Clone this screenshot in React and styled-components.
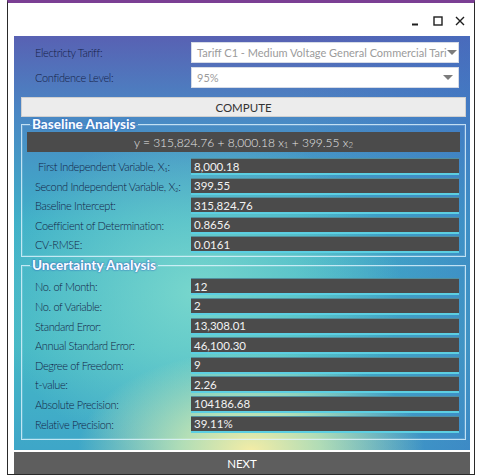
import React from "react";
import styled, { createGlobalStyle } from "styled-components";

const GlobalStyle = createGlobalStyle`
  body {
    margin: 0;
    background: #ffffff;
    font-family: Lato, "Open Sans", sans-serif;
  }
`;

const Window = styled.div`
  box-sizing: border-box;
  width: 468px;
  height: 475px;
  margin-left: 7px;
  border: 1px solid #2a2a2a;
  border-top: 3px solid #7b3f94;
  background: #ffffff;
  display: flex;
  flex-direction: column;
`;

const TitleBar = styled.div`
  height: 33px;
  flex: none;
  display: flex;
  justify-content: flex-end;
  align-items: center;
  gap: 12px;
  padding: 2px 9px 0 0;
  box-sizing: border-box;
`;

const WinButton = styled.svg`
  width: 10px;
  height: 10px;
  stroke: #1e1e1e;
  fill: none;
`;

const Body = styled.div`
  flex: 1;
  margin: 0 4px 0 6px;
  padding: 6px 4px 0 7px;
  background:
    radial-gradient(ellipse 38% 24% at 52% 100%, #f3eca6 0%, rgba(205, 234, 178, 0.8) 40%, rgba(120, 210, 200, 0) 100%),
    radial-gradient(ellipse 45% 40% at 40% 62%, rgba(125, 218, 205, 0.9) 0%, rgba(90, 200, 205, 0) 100%),
    linear-gradient(90deg, rgba(60, 130, 200, 0) 62%, rgba(60, 115, 195, 0.55) 100%),
    linear-gradient(180deg, #5861b3 0%, #4a86c4 18%, #3fb0c8 45%, #45b8c6 75%, #3ea6c8 100%);
`;

const SettingRow = styled.div`
  display: grid;
  grid-template-columns: 1fr 268px;
  align-items: center;
  padding: 0 7px 0 14px;
  & + & {
    margin-top: 4px;
  }
`;

const Label = styled.span`
  font-size: 11px;
  font-weight: 300;
  letter-spacing: -0.35px;
  color: #141d45;
  white-space: nowrap;
  padding-left: ${(p) => (p.$indent ? "3px" : "0")};
`;

const Select = styled.div`
  height: 21px;
  display: flex;
  align-items: center;
  background: #ffffff;
  border: 1px solid #d6dbe6;
  box-sizing: border-box;
  padding: 0 5px;
  font-size: 11px;
  color: #9b9b9b;
`;

const SelectText = styled.span`
  flex: 1;
  white-space: nowrap;
`;

const Arrow = styled.span`
  width: 0;
  height: 0;
  border-left: 5px solid transparent;
  border-right: 5px solid transparent;
  border-top: 5px solid #7c7c7c;
`;

const Compute = styled.div`
  margin-top: 9px;
  height: 20px;
  display: flex;
  align-items: center;
  justify-content: center;
  background: #ececec;
  border: 1px solid #d0d0d0;
  box-sizing: border-box;
  font-size: 11.5px;
  color: #333333;
`;

const Group = styled.fieldset`
  margin: ${(p) => p.$top}px 0 0 0;
  padding: 0 5px ${(p) => p.$bottom}px 5px;
  min-width: 0;
  border: 1px solid rgba(225, 245, 255, 0.8);
  box-shadow: inset 0 0 0 1px rgba(255, 255, 255, 0.15);
`;

const Legend = styled.legend`
  margin-left: 3px;
  padding: 0 2px;
  font-size: 13.5px;
  line-height: 12px;
  font-weight: 900;
  color: #f6fbff;
  text-shadow: 0 0 2px #2f64b8, 0 0 1px #2f64b8;
`;

const Formula = styled.div`
  margin-top: 2px;
  height: 20px;
  display: flex;
  align-items: center;
  justify-content: center;
  background: #4b4b4b;
  font-size: 12px;
  font-weight: 300;
  color: #e6e6e6;
  white-space: pre;
`;

const Sub = styled.span`
  font-size: 8px;
  display: inline-block;
  transform: translateY(3px);
`;

const Fields = styled.div`
  display: grid;
  grid-template-columns: 1fr 268px;
  row-gap: 2.6px;
  align-items: center;
  padding: 0 1px 0 8px;
  margin-top: ${(p) => p.$top}px;
`;

const Value = styled.div`
  height: 17px;
  box-sizing: border-box;
  background: #4b4b4b;
  border-top: 1px solid rgba(90, 200, 225, 0.55);
  border-bottom: 2px solid #5ccfe2;
  padding: 0 3px;
  display: flex;
  align-items: center;
  font-size: 11.5px;
  color: #f2f2f2;
`;

const Next = styled.div`
  flex: none;
  margin: 2px 4px 0 6px;
  height: 22px;
  display: flex;
  align-items: center;
  justify-content: center;
  background: #5e5e5e;
  font-size: 11.5px;
  color: #ffffff;
`;

const baseline = [
  ["First Independent Variable, X₁:", "8,000.18", true],
  ["Second Independent Variable, X₂:", "399.55"],
  ["Baseline Intercept:", "315,824.76"],
  ["Coefficient of Determination:", "0.8656"],
  ["CV-RMSE:", "0.0161"],
];

const uncertainty = [
  ["No. of Month:", "12"],
  ["No. of Variable:", "2"],
  ["Standard Error:", "13,308.01"],
  ["Annual Standard Error:", "46,100.30"],
  ["Degree of Freedom:", "9"],
  ["t-value:", "2.26"],
  ["Absolute Precision:", "104186.68"],
  ["Relative Precision:", "39.11%"],
];

const FieldList = ({ rows, top }) => (
  <Fields $top={top}>
    {rows.map(([label, value, indent]) => (
      <React.Fragment key={label}>
        <Label $indent={indent}>{label}</Label>
        <Value>{value}</Value>
      </React.Fragment>
    ))}
  </Fields>
);

export default function App() {
  return (
    <>
      <GlobalStyle />
      <Window>
        <TitleBar>
          <WinButton viewBox="0 0 10 10" strokeWidth="2">
            <path d="M1 8.5h6" />
          </WinButton>
          <WinButton viewBox="0 0 10 10" strokeWidth="1.4">
            <rect x="1" y="1" width="8" height="8" />
          </WinButton>
          <WinButton viewBox="0 0 10 10" strokeWidth="1.4">
            <path d="M1 1l8 8M9 1l-8 8" />
          </WinButton>
        </TitleBar>
        <Body>
          <SettingRow>
            <Label>Electricty Tariff:</Label>
            <Select>
              <SelectText>Tariff C1 - Medium Voltage General Commercial Tari</SelectText>
              <Arrow />
            </Select>
          </SettingRow>
          <SettingRow>
            <Label>Confidence Level:</Label>
            <Select>
              <SelectText>95%</SelectText>
              <Arrow />
            </Select>
          </SettingRow>
          <Compute>COMPUTE</Compute>
          <Group $top={1} $bottom={3}>
            <Legend>Baseline Analysis</Legend>
            <Formula>
              y = 315,824.76 + 8,000.18 x<Sub>1</Sub> + 399.55 x<Sub>2</Sub>
            </Formula>
            <FieldList rows={baseline} top={6} />
          </Group>
          <Group $top={2} $bottom={6}>
            <Legend>Uncertainty Analysis</Legend>
            <FieldList rows={uncertainty} top={7} />
          </Group>
        </Body>
        <Next>NEXT</Next>
      </Window>
    </>
  );
}
